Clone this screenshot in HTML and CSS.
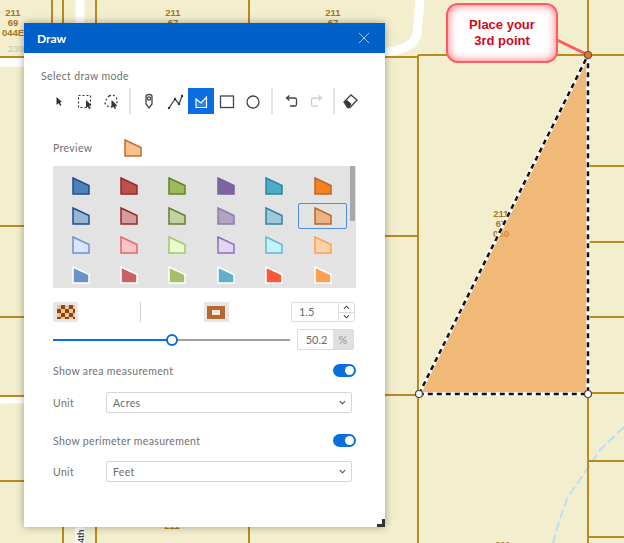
FILE: index.html
```html
<!DOCTYPE html>
<html lang="en">
<head>
  <meta charset="UTF-8" />
  <meta name="viewport" content="width=device-width, initial-scale=1.0" />
  <title>Draw</title>
  <link rel="stylesheet" href="styles.css">
</head>
<body>
  <div class="app">
    <!-- parcel map -->
    <svg class="map" width="624" height="543" viewBox="0 0 624 543">
      <g class="road">
        <path d="M80 0V23" />
        <path d="M0 62H24" />
        <path class="road-thin" d="M0 400H24" />
        <path d="M80 527V543" />
        <path d="M420 0L417 34Q415 44 401 49L385 53" />
      </g>
      <path class="stream" d="M624 427L600 450L568 497Q562 510 553 543" />
      <g class="parcel">
        <path d="M52 0V23M63 0V23M96 0V23M249 0V23" />
        <path d="M63 527V543M96 527V543M249 527V543" />
        <path d="M0 57H24M385 57H418M418 55H624" />
        <path d="M0 226H24M0 317H24M0 396H24M0 481H24" />
        <path d="M385 236H418M385 395H418" />
        <path d="M418 55V543M588 0V543" />
        <path d="M588 166H624M588 242H624M588 317H624M588 393H624M588 461H624M588 537H624" />
      </g>
      <g class="lbl">
        <text x="13" y="16">211</text>
        <text x="13" y="26">69</text>
        <text x="13" y="36">044E</text>
        <text class="lbl-faint" x="16" y="52">239</text>
        <text x="173" y="16">211</text>
        <text x="173" y="26">67</text>
        <text x="333" y="16">211</text>
        <text x="333" y="26">67</text>
        <text x="501" y="217">211</text>
        <text x="501" y="227">67</text>
        <text x="501" y="237">060</text>
        <text x="172" y="529">211</text>
        <text x="503" y="548">211</text>
      </g>
      <path class="tri-fill" d="M419 394L588 55V394Z" />
      <path class="tri-back" d="M419 394L588 55V394Z" />
      <path class="tri-dash" d="M419 394L588 55V394Z" />
      <path class="tail" d="M555 39L588 55" />
      <circle class="vertex-live" cx="588" cy="55" r="3.5" />
      <circle class="vertex" cx="419" cy="394" r="3.5" />
      <circle class="vertex" cx="588" cy="394" r="3.5" />
      <g class="road-name">
        <rect x="75" y="527" width="10" height="16" />
        <text transform="translate(84 543) rotate(-90)">4th</text>
      </g>
    </svg>

    <div class="callout">Place your<br>3rd point</div>

    <div class="panel">
      <div class="panel-head">
        <span>Draw</span>
        <svg class="close" width="12" height="12" viewBox="0 0 14 14"><path d="M1 1L13 13M13 1L1 13" /></svg>
      </div>

      <div class="mode">
        <div class="label">Select draw mode</div>
        <div class="toolbar">
          <button class="tool"><svg width="26" height="26" viewBox="0 0 26 26"><path class="solid" d="M10.500 9L10.500 17L12.500 15.300L14.200 17.800L15.500 17L13.800 14.500L16 14Z" /></svg></button>
          <button class="tool"><svg width="26" height="26" viewBox="0 0 26 26"><rect class="dash" x="6.500" y="7.500" width="12" height="12" /><path class="solid" d="M14 12L14 20L15.800 18.500L17.200 21L18.500 20.200L17.200 17.800L19.500 17.300Z" /></svg></button>
          <button class="tool"><svg width="26" height="26" viewBox="0 0 26 26"><path class="dash" d="M11 8Q15 6 18 9Q20 13 18 18L12 19Q8 18 7 15Q8 11 11 8Z" /><path class="solid" d="M13.500 12L13.500 20L15.300 18.500L16.700 21L18 20.200L16.700 17.800L19 17.300Z" /></svg></button>
          <i class="sep"></i>
          <button class="tool"><svg width="26" height="26" viewBox="0 0 26 26"><path class="line" d="M10 8.500Q10 6.500 13 6.500Q16 6.500 16 8.500V16L13 20L10 16Z" /><circle class="line" cx="13" cy="10.500" r="1.600" /></svg></button>
          <button class="tool"><svg width="26" height="26" viewBox="0 0 26 26"><path class="line" d="M7 20L13 11L17 16L20 8" /><circle class="solid" cx="7" cy="20" r="1.200" /><circle class="solid" cx="13" cy="11" r="1.200" /><circle class="solid" cx="17" cy="16" r="1.200" /><circle class="solid" cx="20" cy="8" r="1.200" /></svg></button>
          <button class="tool active"><svg width="26" height="26" viewBox="0 0 26 26"><path class="line-w" d="M8 11L13 15L18.500 9V19.500H8Z" /></svg></button>
          <button class="tool"><svg width="26" height="26" viewBox="0 0 26 26"><rect class="line" x="6.500" y="8" width="13" height="11.500" /></svg></button>
          <button class="tool"><svg width="26" height="26" viewBox="0 0 26 26"><circle class="line" cx="13" cy="14" r="6" /></svg></button>
          <i class="sep"></i>
          <button class="tool"><svg width="26" height="26" viewBox="0 0 26 26"><path class="line" d="M9 10H17Q18.500 10 18.500 12V16Q18.500 18 17 18H12M11.500 7.500L8.500 10L11.500 12.500" /></svg></button>
          <button class="tool off"><svg width="26" height="26" viewBox="0 0 26 26"><path class="line" d="M17 10H9Q7.500 10 7.500 12V16Q7.500 18 9 18H14M14.500 7.500L17.500 10L14.500 12.500" /></svg></button>
          <i class="sep sep-tight"></i>
          <button class="tool"><svg width="26" height="26" viewBox="0 0 26 26"><path class="line" d="M7 14L14 7L20 12L13 19.500H10.500Z" /><path class="solid" d="M7.500 14L10 12L14.500 16L12.500 19H10.500Z" /></svg></button>
        </div>
      </div>

      <div class="settings">
        <div class="preview">
          <span class="label">Preview</span>
          <svg class="shape" width="18" height="18" viewBox="0 0 18 18"><path d="M1 1L17 8.500V17H1Z" fill="#f9c08e" stroke="#bc6f33" stroke-width="1.500" /></svg>
        </div>

        <div class="swatches">
          <div class="swatch-grid" id="swatchGrid"></div>
          <div class="scroll-thumb"></div>
        </div>

        <div class="style-row">
          <button class="style-btn"><span class="checker"></span></button>
          <i class="vbar"></i>
          <button class="style-btn"><span class="outline"><span></span></span></button>
          <div class="number">
            <span class="number-val">1.5</span>
            <span class="spin">
              <svg width="7" height="5" viewBox="0 0 8 5"><path class="chev" d="M1 4L4 1L7 4" /></svg>
              <svg width="7" height="5" viewBox="0 0 8 5"><path class="chev" d="M1 1L4 4L7 1" /></svg>
            </span>
          </div>
        </div>

        <div class="slider-row">
          <div class="slider">
            <div class="slider-fill" style="width: 50.2%"></div>
            <div class="slider-thumb" style="left: 50.2%"></div>
          </div>
          <div class="percent"><span>50.2</span><b>%</b></div>
        </div>

        <div class="toggle-row area">
          <span class="label">Show area measurement</span>
          <span class="toggle"></span>
        </div>
        <div class="unit-row">
          <span class="label">Unit</span>
          <div class="select"><span>Acres</span><svg width="7" height="5" viewBox="0 0 8 5"><path class="chev" d="M1 1L4 4L7 1" /></svg></div>
        </div>

        <div class="toggle-row perim">
          <span class="label">Show perimeter measurement</span>
          <span class="toggle"></span>
        </div>
        <div class="unit-row">
          <span class="label">Unit</span>
          <div class="select"><span>Feet</span><svg width="7" height="5" viewBox="0 0 8 5"><path class="chev" d="M1 1L4 4L7 1" /></svg></div>
        </div>
      </div>

      <div class="resize"></div>
    </div>
  </div>

  <script>
    // stroke, fill per swatch, row by row
    const swatches = [
      ['#1f4e8c', '#4f81bd'], ['#8f2d2b', '#c0504d'], ['#63802f', '#9bbb59'], ['#7a619b', '#8064a2'], ['#31859c', '#4bacc6'], ['#b8682b', '#f38220'],
      ['#1f4e8c', '#9bb3d4'], ['#8f2d2b', '#d49c9b'], ['#63802f', '#c4d2a0'], ['#8f7dab', '#b2a3c5'], ['#31859c', '#9cc8d7'], ['#b8682b', '#ebb483'],
      ['#6c94d1', '#dbe5ff'], ['#e0686a', '#ffc5c5'], ['#a5c56c', '#e8fdcb'], ['#8e6ebb', '#e2d5f3'], ['#62b8cd', '#c4f1fe'], ['#fb9f54', '#fdd3ad'],
      ['#ffffff', '#6b93c9'], ['#ffffff', '#cb6161'], ['#ffffff', '#a6bc6e'], ['#ffffff', '#62afc8'], ['#ffffff', '#fb583a'], ['#ffffff', '#fb9f52']
    ];

    const grid = document.getElementById('swatchGrid');
    swatches.forEach((s, i) => {
      const el = document.createElement('div');
      el.className = i === 11 ? 'swatch selected' : 'swatch';
      el.innerHTML = `<svg width="18" height="18" viewBox="0 0 18 18"><path d="M1 1L17 8.500V17H1Z" fill="${s[1]}" stroke="${s[0]}" stroke-width="1.500" /></svg>`;
      grid.appendChild(el);
    });
  </script>
</body>
</html>
```

FILE: styles.css
```css
* { margin: 0; padding: 0; box-sizing: border-box; }
body {
  font-family: 'Lato', sans-serif;
  color: #6a6a6a;
  overflow: hidden;
}
.app {
  position: relative;
  width: 624px;
  height: 543px;
  background: #f3efce;
  overflow: hidden;
}

/* map */
.map {
  position: absolute;
  top: 0;
  left: 0;
  display: block;
}
.road path {
  fill: none;
  stroke: #ffffff;
  stroke-width: 9;
}
.road .road-thin { stroke-width: 7; }
.stream {
  fill: none;
  stroke: #bcdcf5;
  stroke-width: 2;
  stroke-dasharray: 9 4;
}
.parcel path {
  fill: none;
  stroke: #b98a22;
  stroke-width: 2;
}
.lbl text {
  font-family: 'Liberation Sans', sans-serif;
  font-size: 9.5px;
  font-weight: bold;
  fill: #a8761c;
  text-anchor: middle;
}
.lbl .lbl-faint {
  fill: #c4c2b0;
  font-weight: normal;
}
.tri-fill {
  fill: #ee9540;
  fill-opacity: 0.6;
}
.tri-back {
  fill: none;
  stroke: #ffffff;
  stroke-width: 3.5;
}
.tri-dash {
  fill: none;
  stroke: #111111;
  stroke-width: 2.5;
  stroke-dasharray: 5 4;
}
.tail {
  stroke: #ff5a64;
  stroke-width: 3;
}
.vertex {
  fill: #ffffff;
  stroke: #444444;
  stroke-width: 1.2;
}
.vertex-live {
  fill: #f2711c;
  stroke: #555555;
  stroke-width: 1.2;
}
.road-name rect { fill: #ffffff; }
.road-name text {
  font-family: 'Liberation Sans', sans-serif;
  font-size: 9px;
  font-weight: bold;
  fill: #444444;
}

.callout {
  position: absolute;
  left: 446px;
  top: 3px;
  width: 112px;
  height: 60px;
  display: flex;
  align-items: center;
  justify-content: center;
  text-align: center;
  background: #ffffff;
  border: 2px solid #ff5a64;
  border-radius: 12px;
  box-shadow: inset 0 0 10px #ff6a72;
  font-family: 'Liberation Sans', sans-serif;
  font-size: 13px;
  line-height: 16px;
  font-weight: bold;
  color: #cc0a1e;
}

/* draw window */
.panel {
  position: absolute;
  left: 24px;
  top: 23px;
  width: 361px;
  height: 504px;
  background: #ffffff;
  box-shadow: 0 0 8px rgba(0,0,0,0.35);
}
.panel-head {
  height: 30px;
  display: flex;
  justify-content: space-between;
  align-items: center;
  padding: 0 15px 0 13px;
  background: #0060c9;
  color: #ffffff;
  font-size: 12px;
  font-weight: bold;
}
.close path {
  fill: none;
  stroke: #a9cdf3;
  stroke-width: 1.1;
}
.label {
  font-size: 10.5px;
  line-height: 14px;
  letter-spacing: 0.35px;
  color: #707070;
}
.mode {
  padding: 16px 17px 0;
}
.toolbar {
  display: flex;
  align-items: center;
  margin: 5px 0 0 5px;
  height: 26px;
}
.tool {
  width: 26px;
  height: 26px;
  background: none;
  border: none;
  flex: none;
}
.tool svg { display: block; }
.tool.active { background: #0a6de0; }
.tool.off { opacity: 0.25; }
.sep {
  width: 2px;
  height: 26px;
  margin: 0 5px;
  background: #e2e2e2;
  flex: none;
}
.sep-tight { margin: 0 2.5px; }
.solid { fill: #333333; stroke: none; }
.line { fill: none; stroke: #444444; stroke-width: 1.3; }
.line-w { fill: rgba(255,255,255,0.15); stroke: #ffffff; stroke-width: 1.2; }
.dash { fill: none; stroke: #333333; stroke-width: 1.2; stroke-dasharray: 2 2; }
.chev { fill: none; stroke: #444444; stroke-width: 1.2; }

.settings {
  padding: 0 29px;
}
.preview {
  display: flex;
  align-items: center;
  margin-top: 25px;
  height: 18px;
}
.preview .label { width: 71px; }
.shape { display: block; }

.swatches {
  position: relative;
  margin-top: 9px;
  height: 122px;
  background: #e3e3e3;
  overflow: hidden;
}
.swatch-grid {
  display: grid;
  grid-template-columns: repeat(6, 48.4px);
  grid-auto-rows: 26px;
  row-gap: 3.5px;
  padding: 7px 0 0 3.5px;
}
.swatch {
  display: flex;
  align-items: center;
  justify-content: center;
  border: 1px solid transparent;
  border-radius: 2px;
}
.swatch.selected { border-color: #4a90e2; }
.scroll-thumb {
  position: absolute;
  top: 0;
  right: 1px;
  width: 5px;
  height: 55px;
  background: #a8a8a8;
}

.style-row {
  display: flex;
  justify-content: space-between;
  align-items: center;
  margin-top: 14px;
  padding-right: 1px;
  height: 20px;
}
.style-btn {
  width: 25px;
  height: 20px;
  display: flex;
  align-items: center;
  justify-content: center;
  background: #e6e6e6;
  border: none;
}
.checker {
  width: 18px;
  height: 14px;
  background: repeating-conic-gradient(#7c4a1e 0 25%, #f5c08c 0 50%) 0 0 / 8px 8px;
}
.outline {
  width: 18px;
  height: 13px;
  display: flex;
  align-items: center;
  justify-content: center;
  background: #b5682f;
}
.outline span {
  width: 8px;
  height: 5px;
  background: #f8e6d6;
}
.vbar {
  width: 1px;
  height: 20px;
  background: #cfcfcf;
}
.number {
  width: 64px;
  height: 20px;
  display: flex;
  border: 1px solid #dcdcdc;
  border-radius: 2px;
}
.number-val {
  flex: 1;
  padding-left: 7px;
  font-size: 11px;
  line-height: 18px;
}
.spin {
  width: 16px;
  display: flex;
  flex-direction: column;
  justify-content: space-around;
  align-items: center;
  border-left: 1px solid #dcdcdc;
  background: linear-gradient(#fff 48%, #dcdcdc 48%, #dcdcdc 54%, #fff 54%);
}
.spin svg { display: block; }

.slider-row {
  display: flex;
  align-items: center;
  gap: 7px;
  margin-top: 7px;
  height: 21px;
}
.slider {
  position: relative;
  width: 237px;
  height: 2px;
  background: #a0a0a0;
}
.slider-fill {
  height: 100%;
  background: #0a6de0;
}
.slider-thumb {
  position: absolute;
  top: -5px;
  width: 12px;
  height: 12px;
  margin-left: -6px;
  background: #ffffff;
  border: 2px solid #0a6de0;
  border-radius: 50%;
}
.percent {
  width: 57px;
  height: 21px;
  display: flex;
  border: 1px solid #dcdcdc;
  border-radius: 2px;
  font-size: 11px;
  line-height: 19px;
}
.percent span {
  flex: 1;
  text-align: center;
  padding-left: 2px;
}
.percent b {
  width: 20px;
  text-align: center;
  background: #e0e0e0;
  font-weight: normal;
  color: #999999;
}

.toggle-row {
  display: flex;
  justify-content: space-between;
  align-items: center;
  height: 13px;
}
.toggle-row.area { margin-top: 14px; }
.toggle-row.perim { margin-top: 21px; }
.toggle {
  position: relative;
  width: 23px;
  height: 13px;
  background: #0a6de0;
  border-radius: 7px;
}
.toggle::after {
  content: '';
  position: absolute;
  top: 2px;
  right: 2px;
  width: 9px;
  height: 9px;
  background: #ffffff;
  border-radius: 50%;
}
.unit-row {
  display: flex;
  align-items: center;
  margin-top: 15px;
  height: 21px;
  padding-right: 4px;
}
.unit-row .label { width: 53px; }
.select {
  flex: 1;
  height: 21px;
  display: flex;
  justify-content: space-between;
  align-items: center;
  padding: 0 5px 0 6px;
  border: 1px solid #d6d6d6;
  border-radius: 2px;
  font-size: 10.5px;
  letter-spacing: 0.35px;
}
.toggle-row.perim + .unit-row { margin-top: 14px; }

.resize {
  position: absolute;
  right: 0;
  bottom: 0;
  width: 8px;
  height: 8px;
  border-right: 3px solid #333333;
  border-bottom: 3px solid #333333;
}
```
